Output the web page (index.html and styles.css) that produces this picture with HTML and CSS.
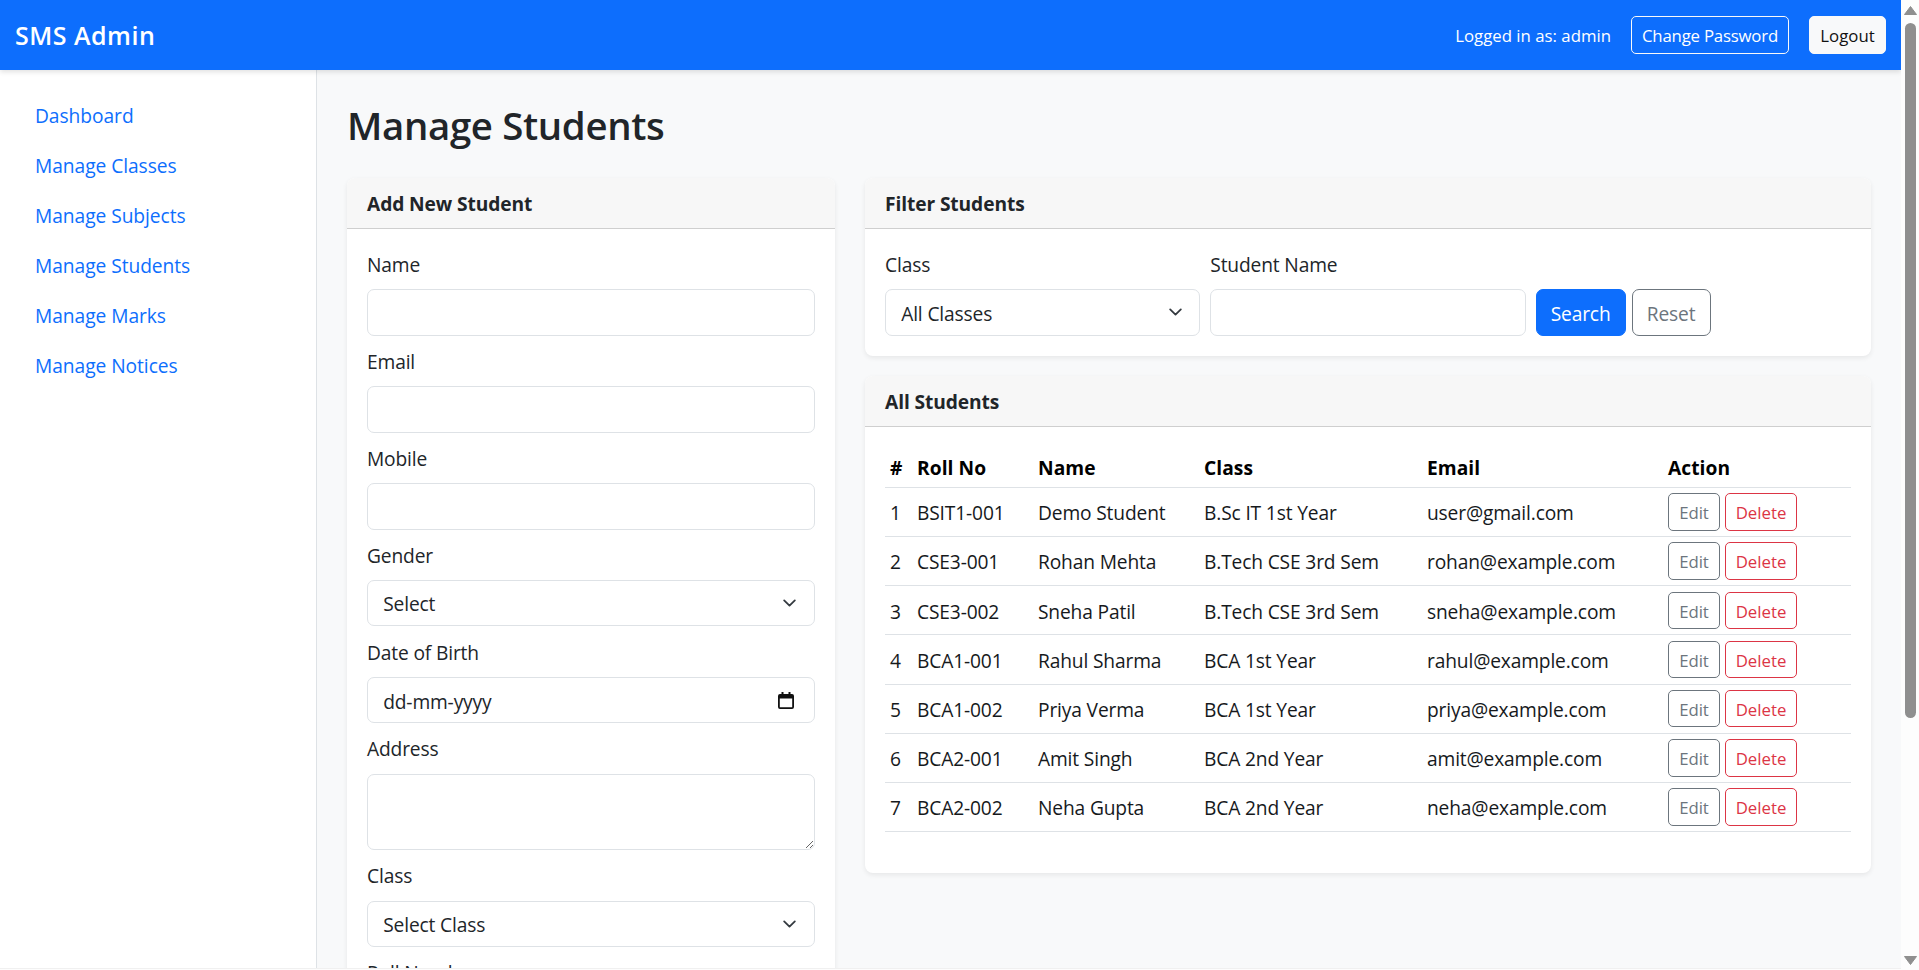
FILE: index.html
```html
<!DOCTYPE html>
<html lang="en">
<head>
<meta charset="utf-8">
<title>Manage Students - SMS Admin</title>
<link rel="stylesheet" href="styles.css">
</head>
<body>
<div class="page">
<header class="navbar">
  <a class="brand" href="#">SMS Admin</a>
  <div class="nav-right">
    <span class="nav-user">Logged in as: admin</span>
    <a class="btn btn-sm btn-outline-light" href="#">Change Password</a>
    <a class="btn btn-sm btn-light" href="#">Logout</a>
  </div>
</header>
<div class="layout">
  <nav class="sidebar">
    <a class="side-link" href="#">Dashboard</a>
    <a class="side-link" href="#">Manage Classes</a>
    <a class="side-link" href="#">Manage Subjects</a>
    <a class="side-link" href="#">Manage Students</a>
    <a class="side-link" href="#">Manage Marks</a>
    <a class="side-link" href="#">Manage Notices</a>
  </nav>
  <main class="main">
    <h1 class="page-title">Manage Students</h1>
    <div class="columns">
      <section class="card">
        <h2 class="card-header">Add New Student</h2>
        <form class="card-body">
          <div class="field"><label class="form-label">Name</label><input class="form-control" type="text"></div>
          <div class="field"><label class="form-label">Email</label><input class="form-control" type="email"></div>
          <div class="field"><label class="form-label">Mobile</label><input class="form-control" type="text"></div>
          <div class="field"><label class="form-label">Gender</label><select class="form-control form-select"><option>Select</option><option>Male</option><option>Female</option></select></div>
          <div class="field"><label class="form-label">Date of Birth</label>
            <div class="date-wrap">
              <input class="form-control" type="text" value="dd-mm-yyyy">
              <svg class="date-icon" viewBox="0 0 16 17" width="16" height="17" aria-hidden="true"><path d="M3.5 0h2v2h5V0h2v2H14a2 2 0 0 1 2 2v11a2 2 0 0 1-2 2H2a2 2 0 0 1-2-2V4a2 2 0 0 1 2-2h1.500zM1.800 6.500V15a.2.2 0 0 0 .2.200h12a.2.2 0 0 0 .2-.200V6.500z" fill="#111" fill-rule="evenodd"/></svg>
            </div>
          </div>
          <div class="field"><label class="form-label">Address</label><textarea class="form-control form-textarea"></textarea></div>
          <div class="field"><label class="form-label">Class</label><select class="form-control form-select"><option>Select Class</option></select></div>
          <div class="field"><label class="form-label">Roll Number</label><input class="form-control" type="text"></div>
          <div class="field"><label class="form-label">Password</label><input class="form-control" type="password"></div>
          <button class="btn btn-primary" type="button">Add Student</button>
        </form>
      </section>
      <div class="stack">
        <section class="card">
          <h2 class="card-header">Filter Students</h2>
          <form class="card-body filter">
            <div class="filter-col"><label class="form-label">Class</label><select class="form-control form-select"><option>All Classes</option></select></div>
            <div class="filter-col"><label class="form-label">Student Name</label><input class="form-control" type="text"></div>
            <div class="filter-actions">
              <button class="btn btn-primary btn-search" type="button">Search</button>
              <a class="btn btn-outline-secondary btn-reset" href="#">Reset</a>
            </div>
          </form>
        </section>
        <section class="card">
          <h2 class="card-header">All Students</h2>
          <div class="card-body table-body">
            <table class="table">
              <colgroup><col class="c-num"><col class="c-roll"><col class="c-name"><col class="c-class"><col class="c-email"><col class="c-action"></colgroup>
              <thead><tr><th>#</th><th>Roll No</th><th>Name</th><th>Class</th><th>Email</th><th>Action</th></tr></thead>
              <tbody>
                <tr><td>1</td><td>BSIT1-001</td><td>Demo Student</td><td>B.Sc IT 1st Year</td><td>user@gmail.com</td><td class="actions"><a class="btn btn-sm btn-outline-secondary btn-edit" href="#">Edit</a><a class="btn btn-sm btn-outline-danger btn-delete" href="#">Delete</a></td></tr>
                <tr><td>2</td><td>CSE3-001</td><td>Rohan Mehta</td><td>B.Tech CSE 3rd Sem</td><td>rohan@example.com</td><td class="actions"><a class="btn btn-sm btn-outline-secondary btn-edit" href="#">Edit</a><a class="btn btn-sm btn-outline-danger btn-delete" href="#">Delete</a></td></tr>
                <tr><td>3</td><td>CSE3-002</td><td>Sneha Patil</td><td>B.Tech CSE 3rd Sem</td><td>sneha@example.com</td><td class="actions"><a class="btn btn-sm btn-outline-secondary btn-edit" href="#">Edit</a><a class="btn btn-sm btn-outline-danger btn-delete" href="#">Delete</a></td></tr>
                <tr><td>4</td><td>BCA1-001</td><td>Rahul Sharma</td><td>BCA 1st Year</td><td>rahul@example.com</td><td class="actions"><a class="btn btn-sm btn-outline-secondary btn-edit" href="#">Edit</a><a class="btn btn-sm btn-outline-danger btn-delete" href="#">Delete</a></td></tr>
                <tr><td>5</td><td>BCA1-002</td><td>Priya Verma</td><td>BCA 1st Year</td><td>priya@example.com</td><td class="actions"><a class="btn btn-sm btn-outline-secondary btn-edit" href="#">Edit</a><a class="btn btn-sm btn-outline-danger btn-delete" href="#">Delete</a></td></tr>
                <tr><td>6</td><td>BCA2-001</td><td>Amit Singh</td><td>BCA 2nd Year</td><td>amit@example.com</td><td class="actions"><a class="btn btn-sm btn-outline-secondary btn-edit" href="#">Edit</a><a class="btn btn-sm btn-outline-danger btn-delete" href="#">Delete</a></td></tr>
                <tr><td>7</td><td>BCA2-002</td><td>Neha Gupta</td><td>BCA 2nd Year</td><td>neha@example.com</td><td class="actions"><a class="btn btn-sm btn-outline-secondary btn-edit" href="#">Edit</a><a class="btn btn-sm btn-outline-danger btn-delete" href="#">Delete</a></td></tr>
              </tbody>
            </table>
          </div>
        </section>
      </div>
    </div>
  </main>
</div>
</div>
<aside class="scrollbar" aria-hidden="true">
  <svg class="sb-arrow" viewBox="0 0 13 9" width="13" height="9"><path d="M6.500 0.500 12.500 8.500H.5z" fill="#8f8f8f" stroke="#8f8f8f" stroke-linejoin="round"/></svg>
  <div class="sb-thumb"></div>
  <svg class="sb-arrow sb-down" viewBox="0 0 13 9" width="13" height="9"><path d="M6.500 8.500 12.500 .5H.5z" fill="#8f8f8f" stroke="#8f8f8f" stroke-linejoin="round"/></svg>
</aside>
</body>
</html>
```

FILE: styles.css
```css
* { box-sizing: border-box; }
html { overflow: hidden; }
body {
  margin: 0;
  height: 100vh;
  display: flex;
  align-items: flex-start;
  overflow: hidden;
  font-family: "Open Sans", "Noto Sans", sans-serif;
  font-size: 19.2px;
  line-height: 1.5;
  letter-spacing: -0.15px;
  color: #212529;
  background: #fdfdfd;
}
a { text-decoration: none; }

.page {
  flex: 1;
  min-width: 0;
  height: 969px;
  overflow: hidden;
  border-bottom: 1px solid #f0f0f0;
  background: #f8f9fa;
}
.scrollbar {
  flex: 0 0 18px;
  height: 970px;
  display: flex;
  flex-direction: column;
  align-items: center;
  padding: 6px 0 5px;
  background: #fdfdfd;
}
.sb-arrow { display: block; flex: none; }
.sb-thumb {
  flex: none;
  width: 11px;
  height: 695px;
  margin-top: 8px;
  border-radius: 6px;
  background: #8f8f8f;
}
.sb-down { margin-top: auto; }

.navbar {
  display: flex;
  align-items: center;
  justify-content: space-between;
  height: 70px;
  padding: 0 15px;
  background: #0d6efd;
  box-shadow: 0 2px 5px rgba(0, 0, 0, .12);
  position: relative;
}
.brand { color: #fff; font-size: 25px; font-weight: 600; letter-spacing: .5px; padding-top: 2px; }
.nav-right { display: flex; align-items: center; }
.nav-user { color: #fff; font-size: 16.8px; letter-spacing: 0; margin-right: 20px; padding-top: 2px; }

.btn {
  display: inline-flex;
  align-items: center;
  justify-content: center;
  height: 46.400px;
  padding: 3px 14.400px 0;
  border: 1px solid transparent;
  border-radius: 7px;
  font: inherit;
  letter-spacing: inherit;
  cursor: pointer;
}
.btn-sm { height: 37.400px; padding: 2px 0 0; font-size: 16.800px; letter-spacing: -0.1px; border-radius: 5px; }
.btn-outline-light { color: #fff; border-color: #f8f9fa; margin-right: 20px; width: 158px; letter-spacing: -0.2px; }
.btn-light { color: #111; background: #f8f9fa; border-color: #f8f9fa; width: 77px; letter-spacing: 0; }
.btn-primary { color: #fff; background: #0d6efd; border-color: #0d6efd; }
.btn-outline-secondary { color: #6c757d; border-color: #6c757d; background: transparent; }
.btn-outline-danger { color: #dc3545; border-color: #dc3545; background: transparent; }

.layout { display: flex; align-items: stretch; }
.sidebar {
  flex: 0 0 317px;
  padding: 22px 0 0 35px;
  background: #fff;
  border-right: 1px solid #dee2e6;
}
.side-link { display: block; height: 50.100px; line-height: 48px; letter-spacing: -0.05px; color: #0d6efd; }

.main { flex: 1; min-width: 0; padding: 30px; }
.page-title { margin: 2px 0 30px; font-size: 38.400px; line-height: 46px; font-weight: 600; letter-spacing: -0.35px; }

.columns { display: flex; align-items: flex-start; gap: 30px; }
.columns > .card { flex: 0 0 488px; }
.stack { flex: 1; min-width: 0; display: flex; flex-direction: column; gap: 20px; }

.card {
  background: #fff;
  border-radius: 8px;
  box-shadow: 0 2px 5px rgba(0, 0, 0, .075);
}
.card-header {
  margin: 0;
  height: 51px;
  padding: 1px 20px 0;
  font-size: 19.200px;
  line-height: 50px;
  font-weight: 700;
  letter-spacing: -0.1px;
  background: #f7f7f7;
  border-bottom: 1px solid #cfcfcf;
  border-radius: 8px 8px 0 0;
}
.card-body { padding: 22px 20px 20px; }

.field { margin-bottom: 12.100px; }
.form-label { display: block; margin-bottom: 9.600px; }
.form-control {
  display: block;
  width: 100%;
  height: 46.400px;
  padding: 3px 15.200px 0;
  border: 1px solid #dee2e6;
  border-radius: 7px;
  background: #fff;
  font: inherit;
  letter-spacing: inherit;
  color: inherit;
}
.form-select {
  appearance: none;
  padding-right: 45px;
  background-image: url("data:image/svg+xml,%3Csvg xmlns='http://www.w3.org/2000/svg' viewBox='0 0 16 16'%3E%3Cpath fill='none' stroke='%23343a40' stroke-linecap='round' stroke-linejoin='round' stroke-width='2' d='m2 5 6 6 6-6'/%3E%3C/svg%3E");
  background-repeat: no-repeat;
  background-position: right 14.400px center;
  background-size: 19.200px 14.400px;
}
.form-textarea { height: 76.400px; padding-top: 7px; }
.date-wrap { position: relative; }
.date-icon { position: absolute; top: 15px; right: 21px; }

.filter { display: flex; align-items: flex-end; gap: 10px; padding-bottom: 20px; }
.filter-col { flex: 0 0 315.300px; }
.filter-actions { display: flex; gap: 6px; }
.btn-search { width: 90px; padding: 3px 0 0; }
.btn-reset { width: 79px; padding: 3px 0 0; }

.table-body { padding-top: 21px; padding-bottom: 41px; }
.table { width: 100%; border-collapse: collapse; table-layout: fixed; color: #16191c; }
.c-num { width: 27px; }
.c-roll { width: 121px; }
.c-name { width: 166px; }
.c-class { width: 223px; }
.c-email { width: 241px; }
.c-action { width: 188px; }
.table th, .table td {
  padding: 3.500px 5px 0;
  height: 49.200px;
  border-bottom: 1px solid #dee2e6;
  text-align: left;
  white-space: nowrap;
}
.table th { font-weight: 700; height: 39.500px; color: #000; letter-spacing: .05px; padding-top: 2px; }
.table td.actions { padding-top: 0; }
.actions .btn { vertical-align: middle; }
.btn-edit { width: 52px; margin-right: 5px; }
.btn-delete { width: 72px; letter-spacing: 0; }
```
